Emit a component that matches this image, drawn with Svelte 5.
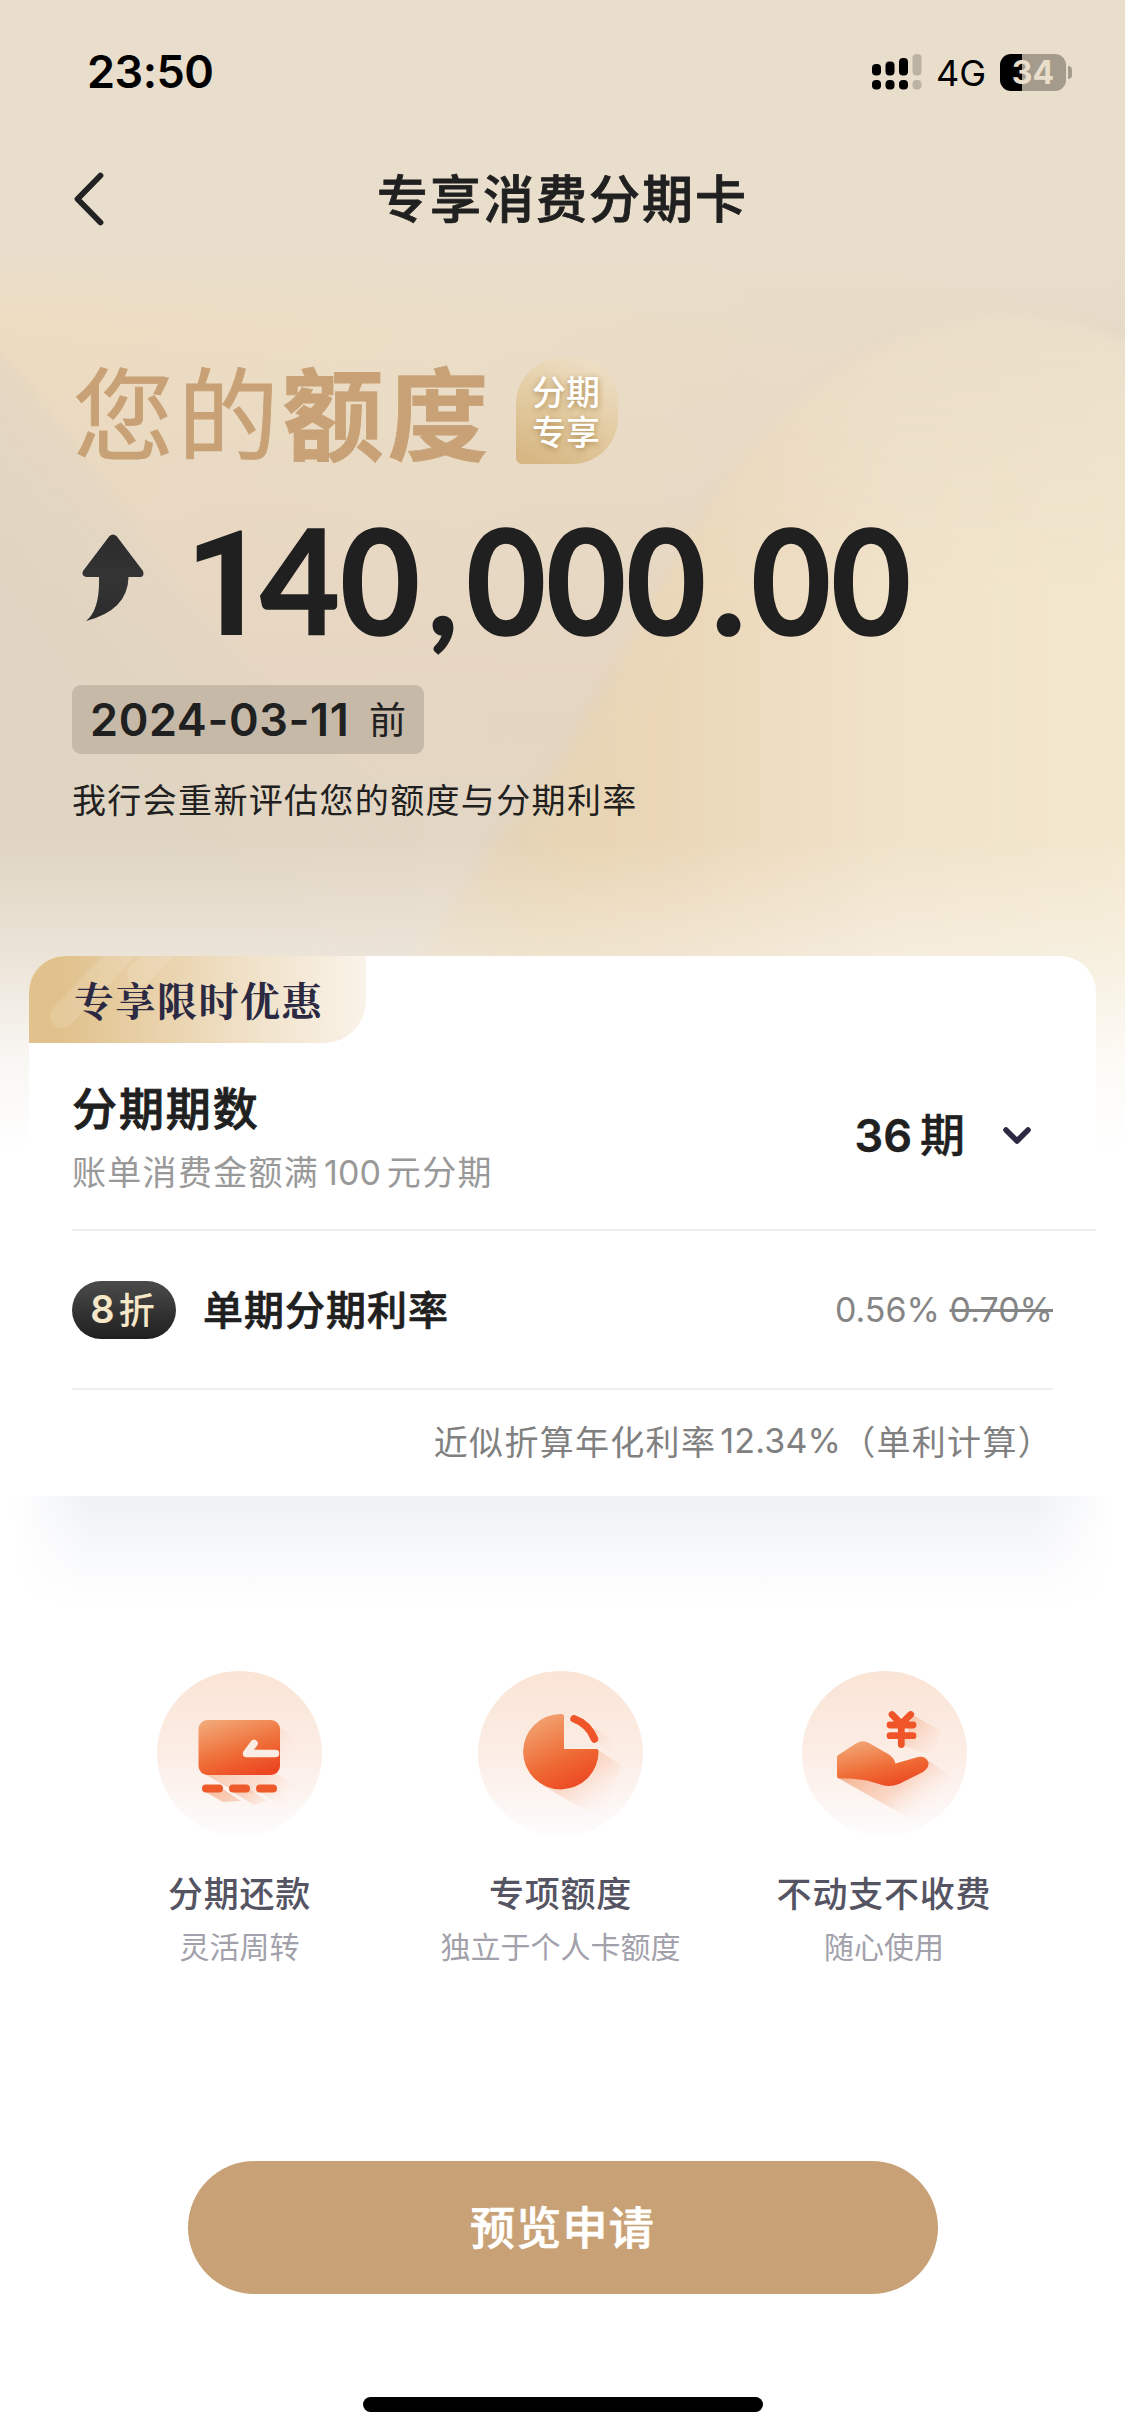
<script>
  const features = [
    { icon: 'wallet', title: '分期还款', note: '灵活周转' },
    { icon: 'pie', title: '专项额度', note: '独立于个人卡额度' },
    { icon: 'hand', title: '不动支不收费', note: '随心使用' }
  ];
  const amount = [...'140,000.00'];
  const kind = (c) => (c === '1' ? 'one' : c === ',' ? 'comma' : c === '.' ? 'dot' : 'digit');
</script>

<div class="page">
  <svg class="backdrop" viewBox="0 0 1125 1200" preserveAspectRatio="none" aria-hidden="true">
    <defs>
      <linearGradient id="base" x1="0" y1="0" x2="1" y2="0">
        <stop offset="0" stop-color="#eedcc0" />
        <stop offset=".4" stop-color="#ebddc6" />
        <stop offset="1" stop-color="#e6dac8" />
      </linearGradient>
      <linearGradient id="dusk" x1="0" y1="320" x2="0" y2="820" gradientUnits="userSpaceOnUse">
        <stop offset="0" stop-color="#e5d5c2" stop-opacity="0" />
        <stop offset=".7" stop-color="#e5d5c2" stop-opacity=".9" />
        <stop offset="1" stop-color="#e3d6c4" />
      </linearGradient>
      <linearGradient id="blob" x1="520" y1="0" x2="1125" y2="0" gradientUnits="userSpaceOnUse">
        <stop offset="0" stop-color="#e6d3b0" />
        <stop offset=".25" stop-color="#ead7b8" />
        <stop offset=".6" stop-color="#f0e2c9" />
        <stop offset="1" stop-color="#f3e7ce" />
      </linearGradient>
      <linearGradient id="blobFade" x1="0" y1="310" x2="0" y2="600" gradientUnits="userSpaceOnUse">
        <stop offset="0" stop-color="#fff" stop-opacity=".4" />
        <stop offset="1" stop-color="#fff" />
      </linearGradient>
      <linearGradient id="edgeFade" x1="430" y1="850" x2="560" y2="910" gradientUnits="userSpaceOnUse">
        <stop offset="0" stop-color="#000" />
        <stop offset="1" stop-color="#000" stop-opacity="0" />
      </linearGradient>
      <mask id="blobMask">
        <rect width="1125" height="1200" fill="url(#blobFade)" />
        <rect y="600" width="1125" height="600" fill="url(#edgeFade)" opacity=".7" />
      </mask>
      <linearGradient id="wedge" x1="180" y1="480" x2="0" y2="600" gradientUnits="userSpaceOnUse">
        <stop offset="0" stop-color="#e2d5c2" stop-opacity=".5" />
        <stop offset="1" stop-color="#e0d5c2" />
      </linearGradient>
      <linearGradient id="toWhite" x1="0" y1="840" x2="0" y2="1150" gradientUnits="userSpaceOnUse">
        <stop offset="0" stop-color="#fff" stop-opacity="0" />
        <stop offset=".38" stop-color="#fff" stop-opacity=".36" />
        <stop offset=".7" stop-color="#fff" stop-opacity=".8" />
        <stop offset="1" stop-color="#fff" />
      </linearGradient>
      <filter id="soft" x="-20%" y="-20%" width="140%" height="140%"><feGaussianBlur stdDeviation="6" /></filter>
      <linearGradient id="head" x1="0" y1="250" x2="0" y2="330" gradientUnits="userSpaceOnUse">
        <stop offset="0" stop-color="#e9decc" />
        <stop offset="1" stop-color="#e9decc" stop-opacity="0" />
      </linearGradient>
    </defs>
    <rect width="1125" height="1200" fill="url(#base)" />
    <rect y="270" width="1125" height="930" fill="url(#dusk)" />
    <path d="M-20 325 L60 425 L160 560 Q250 690 420 820 L420 1200 L-20 1200 Z" fill="url(#wedge)" filter="url(#soft)" />
    <rect width="1125" height="340" fill="url(#head)" />
    <g mask="url(#blobMask)">
      <path d="M1160 360 C1100 320 1040 314 985 316 C900 322 810 385 745 455 C680 545 620 660 565 750 C510 830 450 890 400 1000 L400 1200 L1160 1200 Z" fill="url(#blob)" filter="url(#soft)" />
    </g>
    <rect y="840" width="1125" height="360" fill="url(#toWhite)" />
  </svg>

  <div class="status">
    <span class="time">23:50</span>
    <div class="status-right">
      <svg class="signal" viewBox="0 0 50 36" aria-hidden="true">
        <g fill="#000">
          <rect x="0" y="10" width="9" height="11.500" rx="4" /><rect x="13.500" y="7.500" width="9" height="14" rx="4" /><rect x="27" y="4" width="9" height="17.500" rx="4" />
          <rect x="0" y="26" width="9" height="9.500" rx="4" /><rect x="13.500" y="26" width="9" height="9.500" rx="4" /><rect x="27" y="26" width="9" height="9.500" rx="4" />
        </g>
        <g fill="#bcb2a3"><rect x="40.500" y="0" width="9" height="21.500" rx="4" /><rect x="40.500" y="26" width="9" height="9.500" rx="4" /></g>
      </svg>
      <span class="network">4G</span>
      <span class="battery">34</span>
      <span class="battery-cap"></span>
    </div>
  </div>

  <header class="nav">
    <svg class="back" viewBox="0 0 32 56" aria-hidden="true"><path d="M27.500 4.500 L4.500 28 L27.500 51.500" /></svg>
    <h1>专享消费分期卡</h1>
  </header>

  <section class="hero">
    <div class="headline">
      <h2>您的<b>额度</b></h2>
      <span class="tag">分期<br />专享</span>
    </div>
    <div class="amount">
      <svg class="rise" viewBox="0 0 62 88" aria-hidden="true">
        <defs><linearGradient id="riseFill" x1="0" y1="0" x2="0" y2="1"><stop offset="0" stop-color="#2b2b2b" /><stop offset=".5" stop-color="#343434" /><stop offset="1" stop-color="#2b2b2b" /></linearGradient></defs>
        <path d="M27.500 2 Q31 -1 34.500 2 L61 37 Q63 43 57 43 L46.500 43 Q46 76 4 87 Q18 76 17 43 L4.500 43 Q-1 42 1 37 Z" fill="url(#riseFill)" />
      </svg>
      <span class="figure">{#each amount as c}<span class={kind(c)}>{c}</span>{/each}</span>
    </div>
    <div class="deadline"><b>2024-03-11</b><span>前</span></div>
    <p class="hint">我行会重新评估您的额度与分期利率</p>
  </section>

  <section class="card">
    <div class="ribbon">
      <svg class="streaks" viewBox="0 0 337 87" aria-hidden="true">
        <path d="M33 60 L100 -10" /><path d="M110 18 L140 -12" />
      </svg>
      <span>专享限时优惠</span>
    </div>
    <div class="row term">
      <div>
        <h3>分期期数</h3>
        <p><span>账单消费金额满</span><span class="num">100</span><span>元分期</span></p>
      </div>
      <div class="picker">
        <span><i>36</i>期</span>
        <svg viewBox="0 0 28 18" aria-hidden="true"><path d="M3 3 L14 14 L25 3" /></svg>
      </div>
    </div>
    <div class="row rate">
      <span class="pill"><i>8</i>折</span>
      <strong>单期分期利率</strong>
      <span class="prices">0.56% <s>0.70%</s></span>
    </div>
    <div class="annual"><span>近似折算年化利率</span><span class="num">12.34%</span><span>（单利计算）</span></div>
  </section>
  <div class="shade"></div>

  <section class="features">
    {#each features as f}
      <div class="feature">
        <svg viewBox="0 0 165 165" aria-hidden="true">
          <defs>
            <linearGradient id="disc-{f.icon}" x1="0" y1="0" x2="0" y2="1"><stop offset="0" stop-color="#fae4d5" /><stop offset=".55" stop-color="#fceee7" /><stop offset="1" stop-color="#fdfcfd" /></linearGradient>
            <linearGradient id="ink-{f.icon}" x1=".2" y1="0" x2=".7" y2="1"><stop offset="0" stop-color="#f2a675" /><stop offset=".6" stop-color="#ef6b35" /><stop offset="1" stop-color="#ec4722" /></linearGradient>
            <linearGradient id="cast-{f.icon}" x1="70" y1="80" x2="125" y2="142" gradientUnits="userSpaceOnUse"><stop offset="0" stop-color="#f08a55" stop-opacity=".7" /><stop offset=".55" stop-color="#f6ad88" stop-opacity=".45" /><stop offset="1" stop-color="#fdeee6" stop-opacity="0" /></linearGradient>
            <linearGradient id="glow-{f.icon}" x1="105" y1="55" x2="142" y2="85" gradientUnits="userSpaceOnUse"><stop offset="0" stop-color="#f5a67c" stop-opacity=".5" /><stop offset="1" stop-color="#fdeee6" stop-opacity="0" /></linearGradient>
          </defs>
          <circle cx="82.500" cy="82.500" r="82.500" fill="url(#disc-{f.icon})" />
          {#if f.icon === 'wallet'}
            <path d="M122 56 L158 79 L150 115 L110 115 L120 100 Z" fill="url(#glow-wallet)" opacity=".7" />
            <path d="M46 102 L118 102 L145 118 L110 122 L80 122 Z" fill="url(#cast-wallet)" opacity=".6" />
            <path d="M47 120 L66 118 L84 130 L66 131 Z M74 120 L92 118 L110 130 L97 134 Z M101 120 L120 118 L140 132 L124 134 Z" fill="url(#cast-wallet)" />
            <rect x="41.500" y="49" width="81.500" height="55" rx="9" fill="url(#ink-wallet)" />
            <path d="M118.500 82.500 H89.500 L97 72.500" fill="none" stroke="#fcede4" stroke-width="7.500" stroke-linecap="round" stroke-linejoin="round" />
            <path d="M49 117.500 H62 M76 117.500 H89 M103 117.500 H116" fill="none" stroke="#ef5a2b" stroke-width="8" stroke-linecap="round" />
          {:else if f.icon === 'pie'}
            <path d="M64 114 L120 79 L143 94 L128 145 L112 142 Z" fill="url(#cast-pie)" opacity=".65" />
            <path d="M117 57 L136 70 L136 84 L114 68 Z" fill="url(#glow-pie)" opacity=".7" />
            <path d="M86 78 V45 Q86 43 83 43 A37.700 37.700 0 1 0 120.500 80 Q120.500 78 118.500 78 Z" fill="url(#ink-pie)" />
            <path d="M96 47.800 Q110.500 53 116.500 68" fill="none" stroke="#ef5529" stroke-width="7.500" stroke-linecap="round" />
          {:else}
            <path d="M37 107.500 L93 104 L127 90 L150 106 L128 148 L105 146 Z" fill="url(#cast-hand)" opacity=".85" />
            <path d="M111 44 L139 60 L132 84 L101 75 Z" fill="url(#glow-hand)" />
            <path d="M35 86 Q35 84.500 37 83.500 L54 72.500 Q60.500 68.500 67 72 L87 83.500 Q92 87 93.500 92.500 L116 86 Q124 84.500 126.500 91.500 Q127 97 121 101 L97 113 Q88 116.500 80 114 C66 109 55 107 37 107.500 Q35 107.500 35 105 Z" fill="url(#ink-hand)" />
            <path d="M90 43.500 L99.300 53 L108.700 43.500 M99.300 53 V73.500 M88 54 H111 M88 64.700 H111" fill="none" stroke="#ef5529" stroke-width="6.800" stroke-linecap="round" />
          {/if}
        </svg>
        <h4>{f.title}</h4>
        <p>{f.note}</p>
      </div>
    {/each}
  </section>

  <button class="apply">预览申请</button>
  <div class="home-bar"></div>
</div>

<style>
  :global(body) { margin: 0; background: #fff; }
  .page {
    position: relative; width: 1125px; height: 2435px; overflow: hidden; isolation: isolate;
    display: flex; flex-direction: column; background: #fff; color: #202020;
    font-family: Inter, "Noto Sans CJK SC", sans-serif;
  }
  h1, h2, h3, h4, p { margin: 0; font-weight: 400; }
  i { font-style: normal; }
  .backdrop { position: absolute; inset: 0 auto auto 0; width: 1125px; height: 1200px; z-index: -1; }

  .status { height: 144px; box-sizing: border-box; padding: 0 53px 0 87px; display: flex; align-items: center; justify-content: space-between; color: #000; }
  .time { font-size: 45px; font-weight: 600; line-height: 54px; letter-spacing: -.500px; }
  .status-right { display: flex; align-items: center; }
  .signal { width: 50px; height: 36px; }
  .network { font-size: 36px; line-height: 40px; width: 49px; margin: 2px 15px 0 14px; }
  .battery { width: 66px; height: 37px; border-radius: 11px; background: linear-gradient(90deg, #000 22px, #a59b8c 22px); color: #e9decc; font-size: 32px; font-weight: 700; line-height: 37px; text-align: center; }
  .battery-cap { width: 4px; height: 13px; margin-left: 2px; border-radius: 0 4px 4px 0; background: #a59b8c; }

  .nav { height: 120px; display: grid; grid-template-columns: 125px 1fr 125px; align-items: start; }
  .back { width: 32px; height: 56px; margin: 27px 0 0 73px; fill: none; stroke: #222; stroke-width: 5.800; stroke-linecap: round; stroke-linejoin: round; }
  .nav h1 { text-align: center; font-size: 51px; letter-spacing: 2px; line-height: 76px; padding-top: 18px; font-weight: 500; -webkit-text-stroke: .8px #202020; }

  .hero { height: 692px; padding-left: 72px; display: flex; flex-direction: column; align-items: flex-start; }
  .headline { display: flex; margin-top: 82px; height: 130px; }
  .headline h2 { width: 443px; padding-left: 1px; font-size: 101px; letter-spacing: 3.800px; line-height: 141px; color: #c8a276; white-space: nowrap; -webkit-text-stroke: .8px #c8a276; }
  .headline b { font-weight: 700; }
  .tag { width: 102px; height: 106px; box-sizing: border-box; margin-top: 12px; padding: 15px 0 0 16px; border-radius: 46px 40px 46px 6px; background: linear-gradient(25deg, #d6b682 5%, #e2caa0 45%, #eee0c8 95%); color: #fff; font-size: 34px; line-height: 40px; font-weight: 500; text-shadow: 0 2px 6px #b08b52; }
  .amount { display: flex; align-items: flex-start; height: 209px; }
  .rise { width: 62px; height: 88px; margin: 58px 0 0 10px; }
  .figure { display: flex; align-items: baseline; margin-left: 46px; font: 700 146px/180px Lato, sans-serif; padding-top: 13px; white-space: nowrap; -webkit-text-stroke: 1.600px #202020; }
  .figure span { display: flex; justify-content: center; width: 80px; }
  .figure .digit { transform: scaleX(.94); }
  .figure .one { width: 67px; padding-left: 3px; font-family: Roboto, sans-serif; -webkit-text-stroke: 0; }
  .figure .comma { width: 46px; font-size: 130px; }
  .figure .dot { width: 45px; }
  .deadline { width: 352px; height: 69px; box-sizing: border-box; padding-left: 18px; border-radius: 9px; background: #c7b9a8; display: flex; align-items: center; }
  .deadline b { font-size: 45px; font-weight: 600; letter-spacing: .600px; width: 279px; white-space: nowrap; }
  .deadline span { font-size: 37px; margin-bottom: 4px; }
  .hint { margin-top: 22px; font-size: 34px; letter-spacing: 1.350px; line-height: 50px; }

  .card { width: 1067px; height: 540px; margin-left: 29px; border-radius: 36px 36px 0 0; background: #fff; overflow: hidden; display: flex; flex-direction: column; }
  .ribbon { position: relative; width: 337px; height: 87px; border-radius: 0 0 42px 0; overflow: hidden; background: linear-gradient(90deg, #e1c28d 10%, #f0e1c8 65%, #faf3e9); box-sizing: border-box; padding-left: 45px; display: flex; align-items: center; }
  .ribbon span { position: relative; font: 700 40px/60px "Noto Serif CJK SC", "Noto Serif SC", "Noto Sans CJK SC", serif; letter-spacing: 1.500px; color: #2c2942; margin-bottom: 2px; }
  .streaks { position: absolute; inset: 0; stroke: #fff; stroke-opacity: .13; stroke-width: 24; stroke-linecap: round; }
  .row { display: flex; align-items: center; margin-left: 43px; box-sizing: border-box; }
  .term { height: 188px; padding: 0 65px 0 0; justify-content: space-between; border-bottom: 2px solid #eee; }
  .term h3 { font-size: 45px; letter-spacing: 1.900px; line-height: 60px; font-weight: 500; -webkit-text-stroke: .8px #202020; margin-top: 4px; }
  .term p { display: flex; font-size: 34px; letter-spacing: 1.300px; line-height: 46px; color: #999; margin-top: 10px; }
  .term .num { letter-spacing: 0; margin: 0 6px 0 5px; }
  .picker { display: flex; align-items: center; gap: 38px; padding-bottom: 8px; font-size: 45px; font-weight: 500; }
  .picker i { font-weight: 600; margin-right: 8px; }
  .picker span { -webkit-text-stroke: .4px #202020; }
  .picker svg { width: 28px; height: 18px; margin-top: 7px; fill: none; stroke: #2c2942; stroke-width: 5.500; stroke-linecap: round; stroke-linejoin: round; }
  .rate { height: 159px; margin-right: 43px; border-bottom: 2px solid #eee; }
  .pill { width: 104px; height: 58px; box-sizing: border-box; padding-bottom: 4px; border-radius: 29px; background: linear-gradient(#4b4b4b, #202020); color: #f6e7c8; display: flex; align-items: center; justify-content: center; font-size: 36px; font-weight: 500; }
  .pill i { font-size: 38px; font-weight: 600; margin: 0 4px 0 -3px; padding-top: 2px; }
  .rate strong { margin: 0 0 4px 27px; font-size: 40px; letter-spacing: 1px; font-weight: 500; -webkit-text-stroke: .7px #202020; }
  .prices { margin-left: auto; font-size: 34px; color: #858585; }
  .annual { display: flex; justify-content: flex-end; align-items: center; height: 106px; box-sizing: border-box; padding: 0 43px 5px 0; font-size: 34px; letter-spacing: 1.300px; color: #808080; }
  .annual .num { margin-left: 4px; letter-spacing: .200px; }

  .shade { height: 110px; background: linear-gradient(#eff1f5, #f8f9fb 55%, #fff); mask-image: linear-gradient(90deg, transparent 1%, #000 8%, #000 92%, transparent 99%); }

  .features { margin-top: 65px; padding-left: 78.500px; display: grid; grid-template-columns: 322px 320px 327px; height: 490px; box-sizing: border-box; }
  .feature { display: flex; flex-direction: column; align-items: center; }
  .feature svg { width: 165px; height: 165px; }
  .feature h4 { margin-top: 33px; font-size: 35px; letter-spacing: .800px; line-height: 50px; font-weight: 500; color: #555463; white-space: nowrap; }
  .feature p { margin-top: 8px; font-size: 30px; line-height: 40px; color: #a2a1ab; white-space: nowrap; }

  .apply { width: 750px; height: 133px; box-sizing: border-box; padding: 0 0 4px; align-self: center; border: 0; border-radius: 67px; background: #c8a276; color: #fff; font: 500 45px Inter, "Noto Sans CJK SC", sans-serif; letter-spacing: 1.300px; -webkit-text-stroke: .7px #fff; }
  .home-bar { width: 400px; height: 15px; margin: 103px 0 0 363px; border-radius: 8px; background: #000; }
</style>
